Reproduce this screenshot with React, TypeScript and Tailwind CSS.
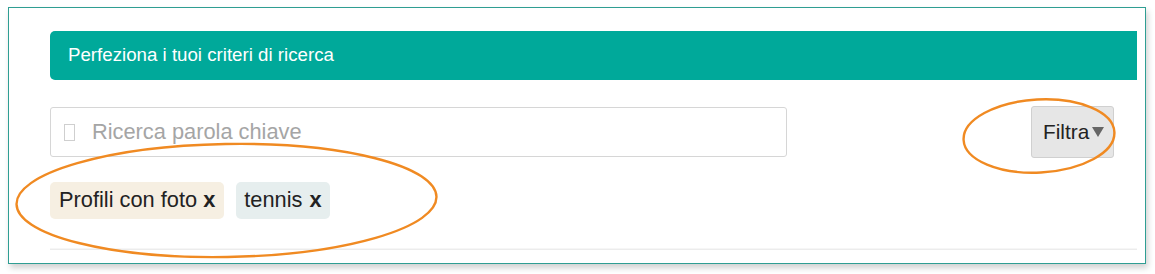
import React from "react";

export default function App() {
  return (
    <div className="relative w-[1155px] h-[274px] bg-white overflow-hidden" style={{ fontFamily: '"Liberation Sans", Arial, sans-serif' }}>
      <div className="ml-[8px] mt-[7px] w-[1138px] h-[257px] border border-[#2f9e93] bg-white shadow-[2px_4px_6px_rgba(0,0,0,0.18)] pt-[23px] pl-[41px] pr-[8px]">
        <div className="h-[49px] bg-[#00a99a] rounded-l-[5px] flex items-center pl-[18px] text-white text-[18.7px]">
          Perfeziona i tuoi criteri di ricerca
        </div>
        <div className="mt-[26px] flex items-center justify-between pr-[23px]">
          <div className="w-[737px] h-[50px] border border-[#d6d6d6] rounded-[3px] flex items-center pl-[13px]">
            <span className="inline-block w-[11px] h-[17px] border border-[#cfcfcf] mr-[17px]"></span>
            <span className="text-[21.8px] text-[#a5a5a5]">Ricerca parola chiave</span>
          </div>
          <div className="w-[83px] h-[52px] bg-[#e6e6e6] border border-[#d0d0d0] rounded-[3px] flex items-center pl-[11px] text-[20.8px] text-[#222]">
            Filtra
            <span className="inline-block w-0 h-0 ml-[3px] border-l-[6px] border-r-[6px] border-t-[10px] border-l-transparent border-r-transparent border-t-[#666]"></span>
          </div>
        </div>
        <div className="mt-[24px] flex gap-[12px]">
          <div className="h-[37px] px-[9px] rounded-[5px] bg-[#f6efe2] flex items-center text-[21.8px] text-[#222]">
            Profili con foto <b className="ml-[6px] font-bold">x</b>
          </div>
          <div className="h-[37px] px-[8px] rounded-[5px] bg-[#e6eeee] flex items-center text-[21.8px] text-[#222]">
            tennis <b className="ml-[7px] font-bold">x</b>
          </div>
        </div>
        <div className="mt-[29px] h-[2px] border-t border-b border-t-[#f6f6f6] border-b-[#ececec]"></div>
      </div>
      <svg className="absolute left-0 top-0 pointer-events-none" width="1155" height="274">
        <ellipse cx="226.5" cy="200.5" rx="210" ry="56.5" fill="none" stroke="#f08a22" strokeWidth="2.4" transform="rotate(-1 226.5 200.5)" />
        <ellipse cx="1039" cy="136" rx="75.5" ry="36.5" fill="none" stroke="#f08a22" strokeWidth="2.4" transform="rotate(-3 1039 136)" />
      </svg>
    </div>
  );
}
